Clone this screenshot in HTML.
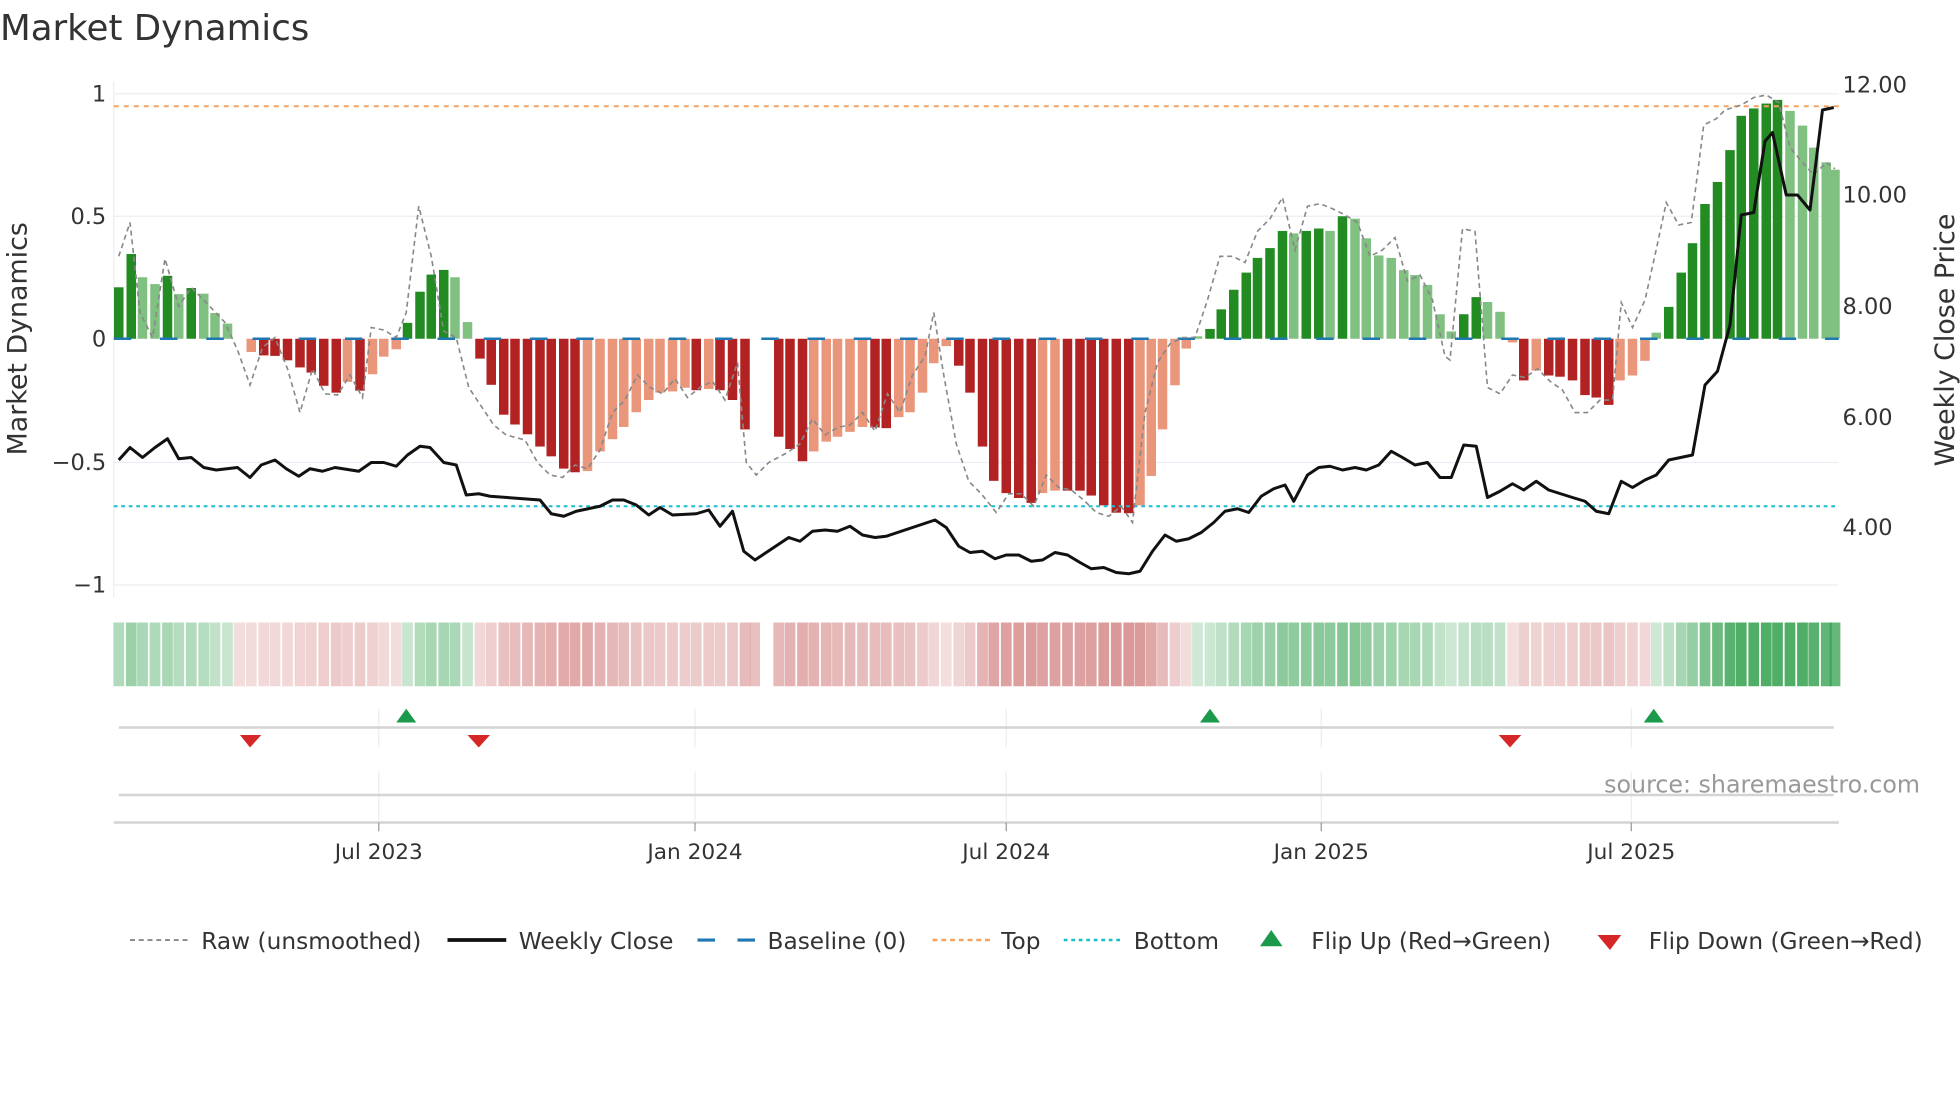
<!DOCTYPE html>
<html><head><meta charset="utf-8"><style>
html,body{margin:0;padding:0;background:#fff;}
svg{display:block;}
text{font-family:"DejaVu Sans","Liberation Sans",sans-serif;fill:#333;}
</style></head><body>
<svg id="s" width="1960" height="1102" viewBox="0 0 1568 881.6" xmlns="http://www.w3.org/2000/svg">
<text x="0" y="32" font-size="28.5">Market Dynamics</text>
<g stroke="#eceef3" stroke-width="1">
<line x1="91" y1="75" x2="1471" y2="75"/><line x1="91" y1="173" x2="1471" y2="173"/>
<line x1="91" y1="370" x2="1471" y2="370"/><line x1="91" y1="468" x2="1471" y2="468"/>
<line x1="91" y1="65" x2="91" y2="478"/>
</g>
<g font-size="18" text-anchor="end">
<text x="85" y="81">1</text><text x="85" y="179">0.5</text><text x="85" y="277">0</text>
<text x="85" y="376">−0.5</text><text x="85" y="474">−1</text>
</g>
<g font-size="18">
<text x="1474" y="74">12.00</text><text x="1474" y="162">10.00</text><text x="1474" y="251">8.00</text>
<text x="1474" y="340">6.00</text><text x="1474" y="428">4.00</text>
</g>
<text transform="translate(21,271) rotate(-90)" font-size="21.5" text-anchor="middle">Market Dynamics</text>
<text transform="translate(1563,272) rotate(-90)" font-size="21.5" text-anchor="middle">Weekly Close Price</text>
<g id="bars"></g>
<line x1="91" y1="85" x2="1471" y2="85" stroke="#f4a460" stroke-width="1.6" stroke-dasharray="4,4"/>
<line x1="91" y1="405" x2="1471" y2="405" stroke="#17becf" stroke-width="1.6" stroke-dasharray="3,3"/>
<line x1="91" y1="271" x2="1471" y2="271" stroke="#1f77b4" stroke-width="2" stroke-dasharray="14,23"/>
<polyline id="raw" fill="none" stroke="#888" stroke-width="1.3" stroke-dasharray="4,3"/>
<polyline id="close" fill="none" stroke="#111" stroke-width="2.4" stroke-linejoin="round"/>
<g id="heat"></g>
<g stroke="#eceef3"><line x1="303" y1="567" x2="303" y2="598"/><line x1="556" y1="567" x2="556" y2="598"/><line x1="805" y1="567" x2="805" y2="598"/><line x1="1057" y1="567" x2="1057" y2="598"/><line x1="1305" y1="567" x2="1305" y2="598"/>
<line x1="303" y1="617" x2="303" y2="656"/><line x1="556" y1="617" x2="556" y2="656"/><line x1="805" y1="617" x2="805" y2="656"/><line x1="1057" y1="617" x2="1057" y2="656"/><line x1="1305" y1="617" x2="1305" y2="656"/></g>
<line x1="95" y1="582" x2="1467" y2="582" stroke="#d4d4d4" stroke-width="2"/>
<line x1="95" y1="636" x2="1467" y2="636" stroke="#d4d4d4" stroke-width="2"/>
<line x1="91" y1="658" x2="1471" y2="658" stroke="#d4d4d4" stroke-width="2"/>
<g fill="#1a9a4a"><polygon points="317,578 325,567 333,578"/><polygon points="960,578 968,567 976,578"/><polygon points="1315,578 1323,567 1331,578"/></g>
<g fill="#d62728"><polygon points="192,588 209,588 200,598"/><polygon points="374,588 392,588 383,598"/><polygon points="1199,588 1217,588 1208,598"/></g>
<g stroke="#999"><line x1="303" y1="658" x2="303" y2="665"/><line x1="556" y1="658" x2="556" y2="665"/><line x1="805" y1="658" x2="805" y2="665"/><line x1="1057" y1="658" x2="1057" y2="665"/><line x1="1305" y1="658" x2="1305" y2="665"/></g>
<g font-size="17.3" text-anchor="middle"><text x="303" y="687">Jul 2023</text><text x="556" y="687">Jan 2024</text><text x="805" y="687">Jul 2024</text><text x="1057" y="687">Jan 2025</text><text x="1305" y="687">Jul 2025</text></g>
<text x="1536" y="634" font-size="19" text-anchor="end" style="fill:#999">source: sharemaestro.com</text>
<g font-size="18.6">
<line x1="104" y1="752" x2="150" y2="752" stroke="#888" stroke-width="1.5" stroke-dasharray="4,3"/><text x="161" y="759">Raw (unsmoothed)</text>
<line x1="358" y1="752" x2="405" y2="752" stroke="#111" stroke-width="3"/><text x="415" y="759">Weekly Close</text>
<line x1="558" y1="752" x2="604" y2="752" stroke="#1f77b4" stroke-width="2.5" stroke-dasharray="14,18"/><text x="614" y="759">Baseline (0)</text>
<line x1="746" y1="752" x2="792" y2="752" stroke="#f4a460" stroke-width="2" stroke-dasharray="4,3"/><text x="801" y="759">Top</text>
<line x1="851" y1="752" x2="897" y2="752" stroke="#17becf" stroke-width="2" stroke-dasharray="3,3"/><text x="907" y="759">Bottom</text>
<polygon points="1008,757 1017,744 1026,757" fill="#1a9a4a"/><text x="1049" y="759">Flip Up (Red→Green)</text>
<polygon points="1278,748 1297,748 1288,760" fill="#d62728"/><text x="1319" y="759">Flip Down (Green→Red)</text>
</g>
</svg>
<script>
var V=[[95,.21],[105,.346],[114,.251],[124,.223],[134,.257],[143,.182],[153,.207],[163,.184],[172,.105],[182,.062],[201,-.054],[211,-.068],[220,-.07],[230,-.088],[240,-.117],[249,-.138],[259,-.192],[269,-.22],[278,-.176],[288,-.212],[298,-.145],[307,-.073],[317,-.043],[326,.065],[336,.192],[345,.262],[355,.281],[364,.251],[374,.068],[384,-.081],[393,-.188],[403,-.31],[412,-.35],[422,-.39],[432,-.44],[441,-.48],[451,-.53],[460,-.545],[470,-.54],[480,-.46],[490,-.41],[499,-.36],[509,-.30],[519,-.25],[528,-.22],[538,-.215],[548,-.20],[557,-.21],[567,-.205],[576,-.21],[586,-.25],[596,-.37],[623,-.40],[632,-.45],[642,-.50],[651,-.46],[661,-.42],[670,-.40],[680,-.38],[690,-.36],[700,-.362],[709,-.365],[719,-.32],[728,-.30],[738,-.22],[747,-.10],[757,-.03],[767,-.11],[776,-.22],[786,-.44],[795,-.58],[805,-.63],[815,-.65],[825,-.67],[834,-.63],[844,-.62],[854,-.62],[864,-.62],[873,-.64],[883,-.68],[893,-.71],[903,-.712],[912,-.68],[921,-.56],[930,-.37],[940,-.19],[949,-.04],[958,.01],[968,.04],[977,.12],[987,.20],[997,.27],[1006,.33],[1016,.37],[1026,.44],[1035,.43],[1045,.44],[1055,.45],[1064,.44],[1074,.50],[1084,.49],[1093,.41],[1103,.34],[1113,.33],[1123,.28],[1132,.26],[1142,.22],[1152,.10],[1161,.03],[1171,.10],[1181,.17],[1190,.15],[1200,.11],[1210,-.015],[1219,-.17],[1229,-.13],[1239,-.15],[1248,-.155],[1258,-.17],[1268,-.23],[1277,-.24],[1287,-.27],[1296,-.17],[1306,-.15],[1316,-.09],[1325,.025],[1335,.13],[1345,.27],[1354,.39],[1364,.55],[1374,.64],[1384,.77],[1393,.91],[1403,.94],[1413,.96],[1422,.975],[1432,.93],[1442,.87],[1451,.78],[1461,.72],[1468,.69]];
var ns="http://www.w3.org/2000/svg",b=document.getElementById('bars'),h=document.getElementById('heat');
function el(p,t,a){var e=document.createElementNS(ns,t);for(var k in a)e.setAttribute(k,a[k]);p.appendChild(e);}
var prev=0;
el(h,'rect',{x:187,y:498,width:9,height:51,fill:'rgba(200,95,95,0.22)'});
el(h,'rect',{x:600,y:498,width:8,height:51,fill:'rgba(200,95,95,0.4)'});
V.forEach(function(d){var x=d[0],v=d[1],y=271-v*196;var dark=Math.abs(v)>=Math.abs(prev);prev=v;
var c=v>0?(dark?'#228b22':'#80c080'):(dark?'#b22222':'#e9967a');
el(b,'rect',{x:x-3.8,y:Math.min(y,271),width:7.6,height:Math.abs(y-271),fill:c});
var a=0.22+0.62*Math.min(1,Math.abs(v)*1.2);var fc=v>0?'rgba(46,158,74,'+a+')':'rgba(200,100,100,'+(0.2+0.65*Math.abs(v))+')';
el(h,'rect',{x:x-4.3,y:498,width:8.6,height:51,fill:fc});});
var C=[[95,368],[104,358],[114,366],[124,358],[134,351],[143,367],[153,366],[163,374],[173,376],[190,374],[200,382],[209,372],[220,368],[229,375],[239,381],[248,375],[258,377],[268,374],[287,377],[297,370],[307,370],[317,373],[326,364],[336,357],[344,358],[355,370],[365,372],[373,396],[383,395],[392,397],[432,400],[441,411],[451,413],[461,409],[480,405],[490,400],[499,400],[509,404],[519,412],[528,406],[538,412],[557,411],[567,408],[576,421],[586,409],[595,441],[604,448],[631,430],[640,433],[650,425],[660,424],[670,425],[680,421],[690,428],[700,430],[709,429],[748,416],[757,422],[767,437],[776,442],[786,441],[796,447],[805,444],[815,444],[825,449],[834,448],[844,442],[854,444],[864,450],[873,455],[883,454],[893,458],[903,459],[912,457],[922,441],[932,428],[941,433],[951,431],[961,426],[971,418],[980,409],[990,407],[999,410],[1009,397],[1019,391],[1028,388],[1035,401],[1046,380],[1055,374],[1064,373],[1074,376],[1084,374],[1093,376],[1103,372],[1113,361],[1122,366],[1132,372],[1142,370],[1152,382],[1161,382],[1171,356],[1181,357],[1190,398],[1200,393],[1210,387],[1219,392],[1229,385],[1239,392],[1258,398],[1268,401],[1277,409],[1287,411],[1297,385],[1306,390],[1316,384],[1325,380],[1335,368],[1354,364],[1364,308],[1374,297],[1384,260],[1393,172],[1403,170],[1412,113],[1418,106],[1429,156],[1438,156],[1448,168],[1458,88],[1467,86]];
var R=[[95,205],[104,178],[112,250],[122,270],[132,207],[143,245],[153,230],[163,240],[180,258],[190,280],[200,308],[210,278],[220,270],[230,295],[240,330],[250,295],[260,315],[270,316],[280,300],[290,318],[297,262],[307,264],[317,270],[325,250],[335,165],[345,205],[355,265],[365,270],[375,310],[385,325],[395,340],[405,348],[420,352],[430,370],[440,380],[450,382],[460,372],[470,375],[480,360],[490,330],[500,320],[510,300],[520,310],[530,315],[540,303],[550,318],[560,310],[570,305],[580,320],[590,290],[597,370],[605,380],[615,370],[630,362],[640,355],[650,335],[660,348],[670,342],[680,340],[690,330],[700,345],[710,315],[720,330],[730,300],[740,285],[747,250],[755,300],[765,355],[775,385],[785,395],[797,410],[807,395],[817,395],[827,405],[837,380],[847,390],[857,392],[867,400],[877,410],[887,413],[897,405],[906,418],[916,330],[926,290],[936,275],[946,270],[956,270],[966,240],[976,205],[986,205],[996,210],[1006,185],[1016,175],[1026,158],[1036,200],[1046,165],[1056,163],[1066,167],[1076,172],[1086,178],[1096,205],[1106,200],[1116,190],[1126,225],[1136,220],[1146,240],[1156,285],[1160,288],[1170,183],[1180,185],[1190,310],[1200,315],[1210,300],[1220,302],[1230,295],[1240,305],[1250,312],[1260,330],[1270,330],[1280,320],[1290,320],[1297,242],[1306,262],[1316,240],[1326,195],[1333,162],[1343,180],[1353,178],[1363,100],[1373,95],[1380,88],[1393,84],[1403,78],[1413,76],[1423,82],[1432,118],[1442,130],[1451,140],[1461,130],[1468,135]];
document.getElementById('close').setAttribute('points',C.map(function(p){return p.join(',')}).join(' '));
document.getElementById('raw').setAttribute('points',R.map(function(p){return p.join(',')}).join(' '));
</script>
</body></html>
